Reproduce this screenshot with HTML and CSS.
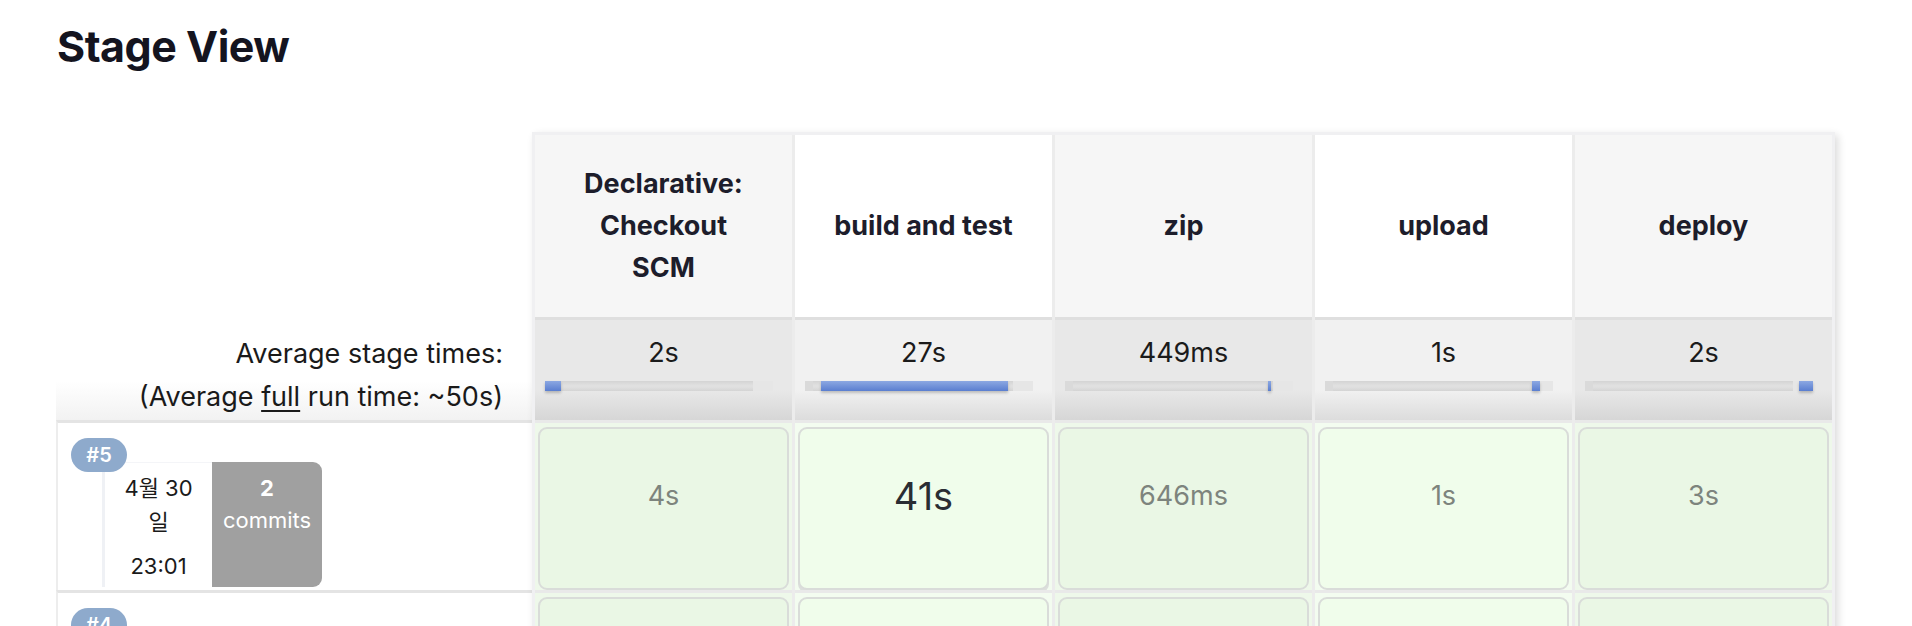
FILE: index.html
```html
<!DOCTYPE html>
<html lang="ko">
<head>
<meta charset="utf-8">
<title>Stage View</title>
<link rel="stylesheet" href="styles.css">
</head>
<body>
<h2 class="title">Stage View</h2>
<div class="stage-view">
  <div class="runs">
    <div class="runs-head"></div>
    <div class="avg-label">Average stage times:<br>(Average <span class="full">full</span> run time: ~50s)</div>
    <div class="run">
      <span class="badge">#5</span>
      <div class="run-info">
        <div class="date-box">
          <div class="date">4월 30일</div>
          <div class="time">23:01</div>
        </div>
        <div class="commits">
          <div class="commit-count">2</div>
          <div class="commit-label">commits</div>
        </div>
      </div>
    </div>
    <div class="run">
      <span class="badge">#4</span>
    </div>
  </div>
  <div class="stages">
    <div class="head odd"><span>Declarative: Checkout SCM</span></div>
    <div class="head even"><span>build and test</span></div>
    <div class="head odd"><span>zip</span></div>
    <div class="head even"><span>upload</span></div>
    <div class="head odd"><span>deploy</span></div>

    <div class="avg odd"><div class="avg-time">2s</div><div class="bar"><div class="fill" style="margin-left:0%;width:7%"></div></div></div>
    <div class="avg even"><div class="avg-time">27s</div><div class="bar"><div class="fill" style="margin-left:7%;width:82%"></div></div></div>
    <div class="avg odd"><div class="avg-time">449ms</div><div class="bar"><div class="fill" style="margin-left:89%;width:1.4%"></div></div></div>
    <div class="avg even"><div class="avg-time">1s</div><div class="bar"><div class="fill" style="margin-left:90.6%;width:3.6%"></div></div></div>
    <div class="avg odd"><div class="avg-time">2s</div><div class="bar"><div class="fill" style="margin-left:94%;width:6%"></div></div></div>

    <div class="cell odd"><div class="box">4s</div></div>
    <div class="cell even"><div class="box long">41s</div></div>
    <div class="cell odd"><div class="box">646ms</div></div>
    <div class="cell even"><div class="box">1s</div></div>
    <div class="cell odd"><div class="box">3s</div></div>

    <div class="cell odd"><div class="box"></div></div>
    <div class="cell even"><div class="box"></div></div>
    <div class="cell odd"><div class="box"></div></div>
    <div class="cell even"><div class="box"></div></div>
    <div class="cell odd"><div class="box"></div></div>
  </div>
</div>
</body>
</html>
```
FILE: styles.css
```css
html, body {
  margin: 0;
  padding: 0;
  background: #ffffff;
}
body {
  font-family: Inter, "Noto Sans CJK KR", sans-serif;
  color: #1c1c26;
  overflow: hidden;
  height: 626px;
}
.title {
  margin: 0;
  padding: 20px 0 0 57px;
  font-size: 43px;
  line-height: 53px;
  font-weight: 700;
  letter-spacing: -0.5px;
  color: #14141f;
}
.stage-view {
  display: flex;
  margin: 59px 0 0 56px;
  align-items: flex-start;
}
.runs {
  width: 476px;
  flex: none;
}
.runs-head {
  height: 185px;
}
.avg-label {
  height: 103px;
  box-sizing: border-box;
  padding: 15px 29px 0 0;
  text-align: right;
  font-size: 27px;
  line-height: 43px;
  color: #1a1a1a;
  background: linear-gradient(to bottom, #ffffff 62%, #f2f2f2 100%);
}
.full {
  text-decoration: underline;
  text-underline-offset: 4px;
  text-decoration-thickness: 2px;
}
.run {
  height: 170px;
  box-sizing: border-box;
  border-top: 3px solid #e4e4e4;
  border-left: 2px solid #ededed;
  padding: 15px 0 0 13px;
  display: flex;
  flex-direction: column;
  align-items: flex-start;
}
.badge {
  position: relative;
  z-index: 1;
  height: 34px;
  min-width: 56px;
  box-sizing: border-box;
  padding: 0 12px;
  border-radius: 17px;
  background: #8eaacc;
  color: #ffffff;
  font-size: 20px;
  font-weight: 600;
  line-height: 34px;
  text-align: center;
}
.run-info {
  display: flex;
  margin: -10px 0 0 31px;
  height: 125px;
}
.date-box {
  width: 110px;
  box-sizing: border-box;
  padding: 8px 14px 0;
  background: #ffffff;
  border-left: 3px solid #eff1f5;
  border-top: 1px solid #f4f5f8;
  text-align: center;
  font-size: 22px;
  line-height: 34px;
  color: #1a1a1a;
}
.time {
  margin-top: 10px;
}
.commits {
  width: 110px;
  background: #a0a0a0;
  border-radius: 0 9px 9px 0;
  color: #ffffff;
  text-align: center;
  font-size: 22px;
  line-height: 32px;
  padding-top: 10px;
  box-sizing: border-box;
}
.commit-count {
  font-weight: 700;
}
.stages {
  flex: none;
  display: grid;
  grid-template-columns: repeat(5, 257px);
  grid-template-rows: 182px 103px 170px 170px;
  column-gap: 3px;
  background: #ececec;
  border: 3px solid #f0f0f2;
  box-shadow: 3px 3px 8px rgba(0, 0, 0, 0.14);
}
.head {
  display: flex;
  align-items: center;
  justify-content: center;
  text-align: center;
  font-size: 27px;
  line-height: 42px;
  font-weight: 700;
  color: #1d1d2b;
}
.head span {
  max-width: 186px;
}
.head.odd { background: #f6f6f6; }
.head.even { background: #ffffff; }
.avg {
  box-sizing: border-box;
  border-top: 3px solid #dfdfdf;
  padding-top: 17px;
  text-align: center;
  font-size: 27px;
  line-height: 32px;
  color: #1b1b1b;
}
.avg.odd { background: linear-gradient(to bottom, #e8e8e8 70%, #d6d6d6 100%); }
.avg.even { background: linear-gradient(to bottom, #f1f1f1 70%, #dcdcdc 100%); }
.bar {
  margin: 12px 19px 0 10px;
  height: 10px;
  display: flex;
  background: linear-gradient(to bottom, #d4d4d4, #e0e0e0 45%, #e0e0e0 60%, #d4d4d4);
  box-shadow: inset -20px 0 0 #e6e6e6, inset 8px 0 0 #dadada;
}
.fill {
  height: 10px;
  min-width: 3px;
  background: linear-gradient(to bottom, #8ca8e2, #5a7ed0);
  box-shadow: 0 2px 3px rgba(0, 0, 0, 0.22);
}
.cell {
  box-sizing: border-box;
  border-top: 3px solid #e9e9e9;
  padding: 4px 3px 0;
}
.cell.odd { background: #eef8ea; }
.cell.even { background: #f3fcf0; }
.box {
  height: 163px;
  box-sizing: border-box;
  border: 2px solid #d9dcd9;
  border-radius: 9px;
  display: flex;
  align-items: center;
  justify-content: center;
  padding-bottom: 26px;
  font-size: 27px;
  line-height: 32px;
  color: #7d847d;
}
.cell.odd .box { background: #eaf7e5; }
.cell.even .box { background: #f0fdeb; }
.box.long {
  font-size: 38px;
  line-height: 46px;
  color: #2a2d33;
  box-shadow: 0 3px 0 #dcdfdc;
}
```
